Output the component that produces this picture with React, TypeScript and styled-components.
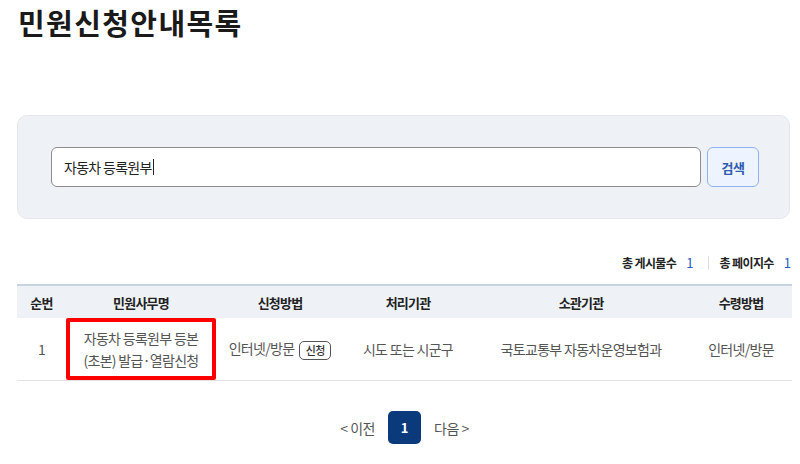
import React from "react";
import styled, { createGlobalStyle } from "styled-components";

const Global = createGlobalStyle`
  html, body { margin: 0; padding: 0; background: #fff; }
  body { font-family: "Noto Sans CJK KR", "Noto Sans", sans-serif; color: #222; }
  * { box-sizing: border-box; }
`;

const Page = styled.div`
  width: 800px;
  padding: 0 8px 0 17px;
  display: flex;
  flex-direction: column;
`;

const Title = styled.h1`
  margin: 0;
  padding: 0 0 0 1px;
  height: 115px;
  font-size: 29px;
  line-height: 44px;
  font-weight: 700;
  letter-spacing: 1.4px;
  color: #1a1a1a;
`;

const SearchBox = styled.div`
  width: 773px;
  height: 104px;
  background: #eef1f6;
  border: 1px solid #e4e8ee;
  border-radius: 10px;
  padding: 31px 30px 0 33px;
  display: flex;
  gap: 6px;
`;

const Input = styled.div`
  width: 650px;
  height: 40px;
  background: #fff;
  border: 1px solid #8c8c8c;
  border-radius: 6px;
  padding: 0 12px;
  display: flex;
  align-items: center;
  font-size: 14px;
  letter-spacing: -0.7px;
  white-space: pre;
  color: #222;
`;

const Caret = styled.span`
  display: inline-block;
  width: 1px;
  height: 16px;
  background: #222;
  margin-left: 1px;
`;

const SearchButton = styled.button`
  width: 52px;
  height: 40px;
  background: #eef4ff;
  border: 1px solid #8fb3ee;
  border-radius: 6px;
  color: #2f5bb0;
  font-family: inherit;
  font-size: 13px;
  font-weight: 700;
  letter-spacing: -0.5px;
  padding: 0;
`;

const Summary = styled.div`
  width: 775px;
  height: 65px;
  display: flex;
  justify-content: flex-end;
  align-items: center;
  padding-top: 22px;
  padding-right: 1px;
  font-size: 12px;
`;

const SumLabel = styled.span`
  font-weight: 700;
  color: #222;
  letter-spacing: -0.6px;
  white-space: pre;
`;

const SumNum = styled.span`
  color: #2a5cc2;
  font-size: 13px;
  margin-left: 10px;
`;

const Sep = styled.span`
  width: 1px;
  height: 14px;
  background: #dcdcdc;
  margin: 0 10px 0 15px;
`;

const Table = styled.table`
  width: 775px;
  border-collapse: collapse;
  table-layout: fixed;
  border-top: 2px solid #c8d3e2;
  font-size: 14px;
  letter-spacing: -0.7px;
`;

const Th = styled.th`
  height: 33px;
  background: #eef2f7;
  font-size: 13px;
  font-weight: 700;
  color: #222;
  letter-spacing: -0.8px;
  text-align: center;
  padding: 0;
`;

const Td = styled.td<{ $marked?: boolean }>`
  height: 62px;
  text-align: center;
  color: #555;
  padding: 0;
  line-height: 22px;
  white-space: pre;
  border-bottom: 1px solid #e2e2e2;
  ${(p) => (p.$marked ? "outline: 4px solid #ff0000; outline-offset: -4px; border-radius: 2px;" : "")}
`;

const Apply = styled.span`
  display: inline-block;
  margin-left: 5px;
  width: 32px;
  height: 19px;
  line-height: 16px;
  border: 1px solid #555;
  border-radius: 5px;
  font-size: 11px;
  font-weight: 500;
  color: #333;
  letter-spacing: -0.5px;
  vertical-align: middle;
`;

const Pager = styled.div`
  width: 775px;
  height: 94px;
  display: flex;
  justify-content: center;
  align-items: center;
  gap: 13px;
  font-size: 14px;
  color: #555;
`;

const PageLink = styled.span`
  letter-spacing: -0.5px;
  white-space: pre;
`;

const PageNum = styled.span`
  width: 33px;
  height: 33px;
  border-radius: 5px;
  background: #0b3a7c;
  color: #fff;
  font-weight: 700;
  font-size: 13px;
  display: flex;
  align-items: center;
  justify-content: center;
`;

export default function App() {
  return (
    <>
      <Global />
      <Page>
        <Title>민원신청안내목록</Title>
        <SearchBox>
          <Input>
            자동차 등록원부<Caret />
          </Input>
          <SearchButton>검색</SearchButton>
        </SearchBox>
        <Summary>
          <SumLabel>총 게시물수</SumLabel>
          <SumNum>1</SumNum>
          <Sep />
          <SumLabel>총 페이지수</SumLabel>
          <SumNum>1</SumNum>
        </Summary>
        <Table>
          <colgroup>
            <col style={{ width: 49 }} />
            <col style={{ width: 150 }} />
            <col style={{ width: 128 }} />
            <col style={{ width: 128 }} />
            <col style={{ width: 218 }} />
            <col style={{ width: 102 }} />
          </colgroup>
          <thead>
            <tr>
              <Th>순번</Th>
              <Th>민원사무명</Th>
              <Th>신청방법</Th>
              <Th>처리기관</Th>
              <Th>소관기관</Th>
              <Th>수령방법</Th>
            </tr>
          </thead>
          <tbody>
            <tr>
              <Td>1</Td>
              <Td $marked>
                자동차 등록원부 등본
                <br />
                (초본) 발급·열람신청
              </Td>
              <Td>
                인터넷/방문<Apply>신청</Apply>
              </Td>
              <Td>시도 또는 시군구</Td>
              <Td>국토교통부 자동차운영보험과</Td>
              <Td>인터넷/방문</Td>
            </tr>
          </tbody>
        </Table>
        <Pager>
          <PageLink>{"< 이전"}</PageLink>
          <PageNum>1</PageNum>
          <PageLink>{"다음 >"}</PageLink>
        </Pager>
      </Page>
    </>
  );
}
